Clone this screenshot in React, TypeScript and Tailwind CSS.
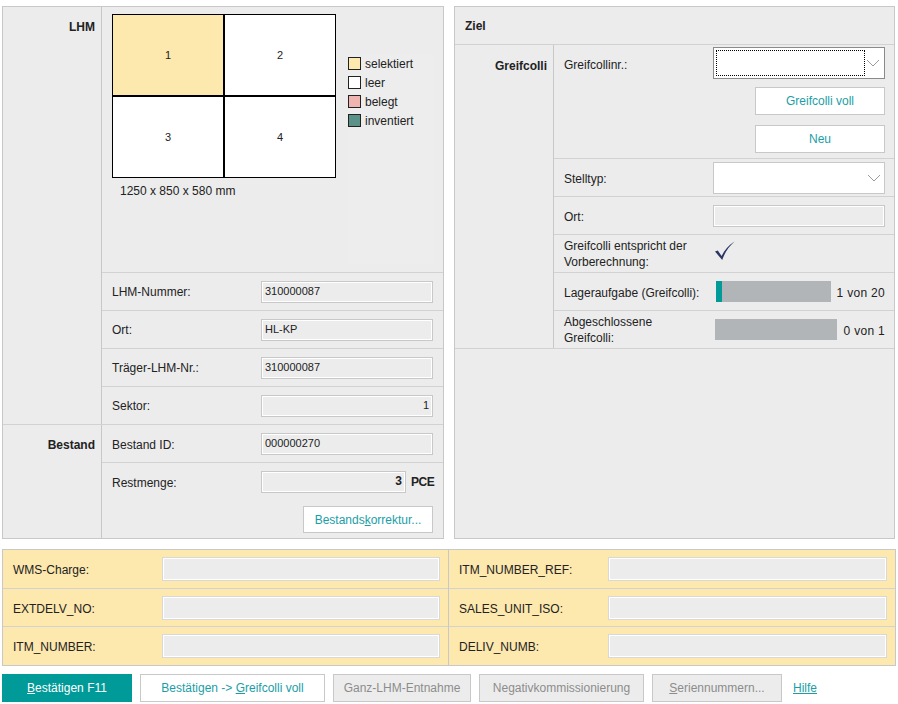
import React from 'react';

const font = { fontFamily: '"Liberation Sans", Arial, sans-serif' };

const ReadOnly: React.FC<{ value?: string; right?: boolean; bold?: boolean; w?: string }> = ({ value, right, bold, w = 'w-[172px]' }) => (
  <div
    className={`${w} h-[22px] border border-[#c8c8c8] bg-[#ececec] shadow-[inset_0_0_0_1px_#ffffff] px-[3px] pt-[2px] text-[11px] leading-[14px] text-[#222] ${right ? 'text-right' : ''} ${bold ? 'font-bold text-[12px]' : ''}`}
  >
    {value}
  </div>
);

const Chevron = () => (
  <svg width="14" height="8" viewBox="0 0 14 8" className="text-[#9a9a9a]">
    <path d="M1 1 L7 7 L13 1" fill="none" stroke="currentColor" strokeWidth="1" />
  </svg>
);

const Row: React.FC<{ label: React.ReactNode; children?: React.ReactNode; h?: string }> = ({ label, children, h = 'h-[38px]' }) => (
  <div className={`flex items-center justify-between border-t border-[#d2d2d2] ${h} pl-[10px] pr-[10px]`}>
    <div className="text-[12px] leading-[15px] text-[#222] pt-[2px]">{label}</div>
    {children}
  </div>
);

const LegendItem: React.FC<{ color: string; label: string }> = ({ color, label }) => (
  <div className="flex items-center gap-[4px] h-[19px]">
    <div className={`w-[13px] h-[13px] border border-[#222] ${color}`} />
    <span className="text-[12px] text-[#222]">{label}</span>
  </div>
);

const Cell: React.FC<{ n: string; sel?: boolean }> = ({ n, sel }) => (
  <div className={`flex items-center justify-center border border-black text-[11px] text-[#222] ${sel ? 'bg-[#fde8ae]' : 'bg-white'}`}>
    {n}
  </div>
);

const FootField: React.FC<{ label: string; first?: boolean }> = ({ label, first }) => (
  <div className={`flex items-center h-[38px] pl-[10px] pr-[9px] ${first ? '' : 'border-t border-[#d2d2d2]'}`}>
    <div className="w-[150px] text-[12px] text-[#222] pt-[2px]">{label}</div>
    <div className="flex-1 h-[22px] border border-[#ffffff] bg-[#ececec] shadow-[0_0_0_1px_#d8d8d8]" />
  </div>
);

export default function App() {
  return (
    <div style={font} className="w-[898px] h-[704px] bg-white pt-[6px] pl-[2px] pr-[3px] text-[#222]">
      <div className="flex gap-[10px]">
        {/* left panel */}
        <div className="w-[443px] h-[533px] border border-[#c8c8c8] bg-[#ececec] flex flex-col">
          <div className="flex">
            <div className="w-[99px] border-r border-[#c8c8c8] text-right pr-[6px] pt-[11px] text-[12px] font-bold">LHM</div>
            <div className="flex-1 flex flex-col">
              <div className="h-[265px] flex pl-[10px] pt-[7px]">
                <div className="flex flex-col">
                  <div className="grid grid-cols-2 grid-rows-2 w-[224px] h-[164px]">
                    <Cell n="1" sel />
                    <Cell n="2" />
                    <Cell n="3" />
                    <Cell n="4" />
                  </div>
                  <div className="pl-[8px] pt-[4px] text-[12px]">1250 x 850 x 580 mm</div>
                </div>
                <div className="ml-[12px] mt-[40px] w-[86px] h-[210px] bg-[#ededed]">
                  <LegendItem color="bg-[#fde8ae]" label="selektiert" />
                  <LegendItem color="bg-white" label="leer" />
                  <LegendItem color="bg-[#efb3b0]" label="belegt" />
                  <LegendItem color="bg-[#5a9189]" label="inventiert" />
                </div>
              </div>
              <Row label="LHM-Nummer:"><ReadOnly value="310000087" /></Row>
              <Row label="Ort:"><ReadOnly value="HL-KP" /></Row>
              <Row label="Träger-LHM-Nr.:"><ReadOnly value="310000087" /></Row>
              <Row label="Sektor:"><ReadOnly value="1" right /></Row>
            </div>
          </div>
          <div className="flex flex-1 border-t border-[#d2d2d2]">
            <div className="w-[99px] border-r border-[#c8c8c8] text-right pr-[6px] pt-[11px] text-[12px] font-bold">Bestand</div>
            <div className="flex-1 flex flex-col">
              <div className="flex items-center justify-between h-[37px] px-[10px]">
                <div className="text-[12px] pt-[2px]">Bestand ID:</div>
                <ReadOnly value="000000270" />
              </div>
              <div className="border-t border-[#d2d2d2] flex-1 px-[10px]">
                <div className="flex items-center justify-between h-[38px]">
                  <div className="text-[12px] pt-[2px]">Restmenge:</div>
                  <div className="flex items-center gap-[5px]">
                    <div className="w-[145px] h-[22px] border border-[#c8c8c8] bg-[#ececec] shadow-[inset_0_0_0_1px_#ffffff] px-[3px] text-right text-[12px] font-bold leading-[18px]">3</div>
                    <span className="w-[22px] text-[12px] font-bold tracking-[-0.5px] whitespace-nowrap">PCE</span>
                  </div>
                </div>
                <div className="flex justify-end pt-[5px]">
                  <button className="w-[130px] h-[27px] bg-white border border-[#c8c8c8] text-[12px] text-[#1a9ea6]">
                    Bestands<span className="underline">k</span>orrektur...
                  </button>
                </div>
              </div>
            </div>
          </div>
        </div>

        {/* right panel */}
        <div className="w-[442px] h-[533px] border border-[#c8c8c8] bg-[#ececec] flex flex-col">
          <div className="h-[38px] flex items-center pl-[10px] text-[12px] font-bold border-b border-[#d2d2d2]">Ziel</div>
          <div className="flex border-b border-[#d2d2d2]">
            <div className="w-[99px] border-r border-[#c8c8c8] text-right pr-[6px] pt-[12px] text-[12px] font-bold">Greifcolli</div>
            <div className="flex-1 flex flex-col">
              <div className="h-[113px] flex justify-between pl-[10px] pr-[9px] pt-[2px]">
                <div className="text-[12px] pt-[9px]">Greifcollinr.:</div>
                <div className="flex flex-col items-end">
                  <div className="w-[172px] h-[32px] border border-[#8a8a8a] bg-white flex items-center pl-[2px] pr-[4px]">
                    <div className="w-[149px] h-[26px] border border-dotted border-black" />
                    <div className="ml-auto"><Chevron /></div>
                  </div>
                  <button className="mt-[8px] w-[130px] h-[28px] bg-white border border-[#c8c8c8] text-[12px] text-[#1a9ea6]">Greifcolli voll</button>
                  <button className="mt-[10px] w-[130px] h-[28px] bg-white border border-[#c8c8c8] text-[12px] text-[#1a9ea6]">Neu</button>
                </div>
              </div>
              <div className="flex items-center justify-between h-[38px] border-t border-[#d2d2d2] pl-[10px] pr-[9px]">
                <div className="text-[12px] pt-[2px]">Stelltyp:</div>
                <div className="w-[172px] h-[32px] border border-[#c8c8c8] bg-white flex items-center justify-end pr-[3px]">
                  <Chevron />
                </div>
              </div>
              <div className="flex items-center justify-between h-[38px] border-t border-[#d2d2d2] pl-[10px] pr-[9px]">
                <div className="text-[12px] pt-[2px]">Ort:</div>
                <ReadOnly />
              </div>
              <div className="flex items-center h-[38px] border-t border-[#d2d2d2] pl-[10px] pr-[9px]">
                <div className="w-[150px] text-[12px] leading-[16px]">Greifcolli entspricht der Vorberechnung:</div>
                <svg width="20" height="20" viewBox="0 0 20 20" className="ml-[1px] -mt-[6px]">
                  <path d="M0 10.5 L2.8 9.4 L6.6 15 C9.5 9 13.5 4.5 19.5 0.5 C14 5.5 10 11 7.2 19 Z" fill="#2c3667" />
                </svg>
              </div>
              <div className="flex items-center justify-between h-[38px] border-t border-[#d2d2d2] pl-[10px] pr-[9px]">
                <div className="text-[12px] pt-[2px]">Lageraufgabe (Greifcolli):</div>
                <div className="flex items-center">
                  <div className="w-[115px] h-[21px] bg-[#b2b5b7] flex">
                    <div className="w-[6px] h-full bg-[#009a98]" />
                  </div>
                  <span className="ml-[6px] text-[12px] tracking-[0.3px] pt-[2px]">1 von 20</span>
                </div>
              </div>
              <div className="flex items-center justify-between h-[38px] border-t border-[#d2d2d2] pl-[10px] pr-[9px]">
                <div className="text-[12px] leading-[16px] w-[120px]">Abgeschlossene Greifcolli:</div>
                <div className="flex items-center">
                  <div className="w-[122px] h-[21px] bg-[#b2b5b7]" />
                  <span className="ml-[7px] text-[12px] tracking-[0.3px] pt-[2px]">0 von 1</span>
                </div>
              </div>
            </div>
          </div>
        </div>
      </div>

      {/* yellow fields */}
      <div className="mt-[10px] w-[894px] h-[117px] border border-[#c8c8c8] bg-[#fde8ae] flex">
        <div className="w-[446px] border-r border-[#c8c8c8]">
          <FootField label="WMS-Charge:" first />
          <FootField label="EXTDELV_NO:" />
          <FootField label="ITM_NUMBER:" />
        </div>
        <div className="flex-1">
          <FootField label="ITM_NUMBER_REF:" first />
          <FootField label="SALES_UNIT_ISO:" />
          <FootField label="DELIV_NUMB:" />
        </div>
      </div>

      {/* buttons */}
      <div className="mt-[8px] flex items-center gap-[8px]">
        <button className="w-[130px] h-[28px] bg-[#009a98] text-white text-[12px]">
          <span className="underline">B</span>estätigen F11
        </button>
        <button className="w-[185px] h-[28px] bg-white border border-[#c8c8c8] text-[12px] text-[#1a9ea6]">
          Bestätigen -&gt; <span className="underline">G</span>reifcolli voll
        </button>
        <button className="w-[138px] h-[28px] bg-[#ececec] border border-[#c8c8c8] text-[12px] text-[#8c8c8c]">Ganz-LHM-Entnahme</button>
        <button className="w-[165px] h-[28px] bg-[#ececec] border border-[#c8c8c8] text-[12px] text-[#8c8c8c]">Negativkommissionierung</button>
        <button className="w-[130px] h-[28px] bg-[#ececec] border border-[#c8c8c8] text-[12px] text-[#8c8c8c]">
          <span className="underline">S</span>eriennummern...
        </button>
        <a className="ml-[3px] text-[12px] text-[#1a9ea6] underline">Hilfe</a>
      </div>
    </div>
  );
}
